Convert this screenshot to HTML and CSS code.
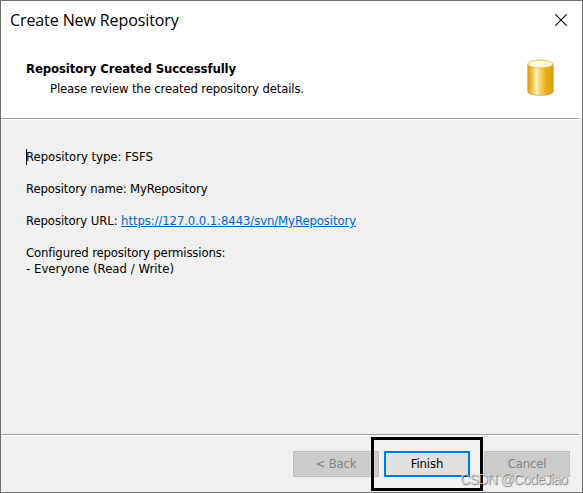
FILE: index.html
```
<!DOCTYPE html>
<html lang="en">
<head>
<meta charset="utf-8">
<title>Create New Repository</title>
<link rel="stylesheet" href="styles.css">
</head>
<body>
<div class="window">
  <header class="header">
    <div class="titlebar">
      <span class="title">Create New Repository</span>
      <svg class="close" width="12" height="12" viewBox="0 0 12 12"><path d="M.3.3 11.7 11.7M11.7.3.3 11.7" stroke="#000" stroke-width="1.1" fill="none"/></svg>
    </div>
    <div class="banner">
      <div>
        <h1 class="heading">Repository Created Successfully</h1>
        <p class="sub">Please review the created repository details.</p>
      </div>
      <svg class="database" width="28" height="38" viewBox="0 0 28 38">
        <defs>
          <linearGradient id="gold">
            <stop offset="0" stop-color="#dfa00c"/><stop offset=".14" stop-color="#edbc3c"/>
            <stop offset=".35" stop-color="#fff4b5"/><stop offset=".48" stop-color="#f5d66b"/>
            <stop offset=".72" stop-color="#e7ad1d"/><stop offset="1" stop-color="#dfa000"/>
          </linearGradient>
        </defs>
        <path d="M.8 5v27.6c0 5 25.4 5 25.4 0V5Z" fill="url(#gold)" stroke="#c99a43" stroke-width=".7"/>
        <ellipse cx="13.5" cy="5" rx="12.7" ry="4" fill="#fffbd0" stroke="#cda65c" stroke-width=".7"/>
      </svg>
    </div>
  </header>
  <div class="rule"></div>
  <main class="details">
    <p class="line"><span class="caret"></span><span class="type">Repository type: FSFS</span></p>
    <p class="line"><span class="name">Repository name: MyRepository</span></p>
    <p class="line"><span class="url">Repository URL: </span><a class="link">https://127.0.0.1:8443/svn/MyRepository</a></p>
    <p class="line">Configured repository permissions:<br><span class="permission">- Everyone (Read / Write)</span></p>
  </main>
  <div class="rule"></div>
  <footer class="footer">
    <button class="btn disabled" disabled>&lt; Back</button>
    <button class="btn primary">Finish</button>
    <button class="btn disabled cancel" disabled>Cancel</button>
  </footer>
  <div class="highlight"></div>
  <div class="watermark">CSDN @CodeJiao</div>
</div>
</body>
</html>
```
FILE: styles.css
```
* { box-sizing: border-box; }
body { margin: 0; }
h1, p { margin: 0; }
.window {
  position: relative;
  display: flex;
  flex-direction: column;
  width: 583px;
  height: 493px;
  border: 1px solid #707070;
  background: #f0f0f0;
  color: #000;
  font: 13px/16px "DejaVu Sans Condensed", "DejaVu Sans", sans-serif;
  font-stretch: condensed;
  letter-spacing: -0.15px;
  white-space: nowrap;
  overflow: hidden;
}
.header { height: 117px; background: #fff; }
.titlebar {
  display: flex;
  justify-content: space-between;
  align-items: center;
  height: 37px;
  padding: 0 15px 0 9px;
}
.title { font: 16px/22px "Open Sans", "Noto Sans", sans-serif; letter-spacing: -0.1px; }
.close { display: block; }
.banner {
  display: flex;
  justify-content: space-between;
  padding: 21px 27px 0 25px;
}
.heading { font-size: 13px; line-height: 20px; font-weight: bold; letter-spacing: -0.1px; }
.sub { line-height: 20px; padding-left: 24px; }
.database { display: block; }
.rule {
  height: 2px;
  margin-right: 3px;
  background: #fff;
  border-top: 1px solid #a0a0a0;
}
.details {
  height: 314px;
  padding: 29px 25px 0;
  display: flex;
  flex-direction: column;
  gap: 16px;
}
.line { position: relative; }
.caret { position: absolute; left: 0; top: 0; width: 1px; height: 16px; background: #000; }
.type { letter-spacing: -0.03px; }
.url { letter-spacing: -0.1px; }
.permission { letter-spacing: 0.03px; }
.link { color: #0066cc; text-decoration: underline; letter-spacing: -0.1px; }
.footer { display: flex; padding: 15px 12px 0 292px; gap: 5px; }
.btn {
  width: 86px;
  height: 26px;
  padding: 0;
  border: 1px solid #bfbfbf;
  background: #ccc;
  color: #838383;
  font: inherit;
  letter-spacing: inherit;
}
.primary { border: 2px solid #0078d7; background: #e1e1e1; color: #000; }
.cancel { margin-left: 9px; }
.highlight {
  position: absolute;
  left: 370px;
  top: 436px;
  width: 112px;
  height: 54px;
  border: 3px solid #000;
}
.watermark {
  position: absolute;
  left: 459px;
  top: 469px;
  font: 14px/18px "Liberation Sans", sans-serif;
  letter-spacing: -0.7px;
  color: rgba(225, 225, 225, .75);
  text-shadow: 1px 1px 1px rgba(0, 0, 0, .5);
}
```
